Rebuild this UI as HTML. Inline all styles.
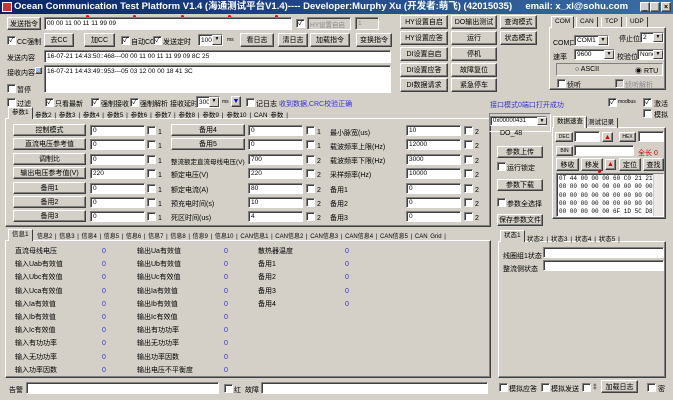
<!DOCTYPE html>
<html><head><meta charset="utf-8"><style>
*{box-sizing:border-box;margin:0;padding:0}
body{width:673px;height:400px;background:#d4d0c8;font-family:"Liberation Sans","Noto Sans CJK SC",sans-serif;font-size:7px;color:#000;position:relative;overflow:hidden}
.a{position:absolute;white-space:nowrap}
.btn{position:absolute;background:#d4d0c8;border:1px solid;border-color:#fff #404040 #404040 #fff;box-shadow:inset -1px -1px #808080;text-align:center;font-size:7px;display:flex;align-items:center;justify-content:center;white-space:nowrap;overflow:hidden}
.in{position:absolute;background:#fff;border:1px solid;border-color:#808080 #fff #fff #808080;box-shadow:inset 1px 1px #404040;font-size:6.5px;padding-left:2px;display:flex;align-items:center;white-space:nowrap;overflow:hidden}
.cb{position:absolute;width:9px;height:9px;background:#fff;border:1px solid;border-color:#808080 #fff #fff #808080;box-shadow:inset 1px 1px #404040;font-size:7px;line-height:7px;text-align:center}
.pan{position:absolute;border:1px solid;border-color:#fff #404040 #404040 #fff;box-shadow:inset -1px -1px #808080}
.tab{position:absolute;font-size:6.5px;border-left:1px solid #fff;border-right:1px solid #404040;padding:0 3px;height:10px;line-height:10px}
.v{color:#3333cc}
.dd{position:absolute;width:10px;background:#d4d0c8;border:1px solid;border-color:#fff #404040 #404040 #fff;font-size:5px;text-align:center}
.red{position:absolute;width:3px;height:3px;background:#e00;border-radius:2px;top:15px}
</style></head><body>
<div class="a" style="left:0;top:0;width:673px;height:14px;background:linear-gradient(90deg,#0a246a,#3a6ea5);color:#fff;font-weight:bold;font-size:9.5px;line-height:14px;padding-left:14px">Ocean Communication Test Platform V1.4 (海通测试平台V1.4)---- Developer:Murphy Xu (开发者:萌飞) (42015035) &nbsp; &nbsp; email: x_xl@sohu.com</div>
<div class="a" style="left:2px;top:2px;width:10px;height:10px;background:#c33;border:1px solid #fff"></div>
<div class="btn" style="left:640px;top:2px;width:10px;height:10px;font-size:7px">_</div>
<div class="btn" style="left:650px;top:2px;width:10px;height:10px"></div>
<div class="btn" style="left:661px;top:2px;width:10px;height:10px;font-weight:bold">×</div>
<div class="red" style="left:86px"></div><div class="red" style="left:133px"></div><div class="red" style="left:181px"></div><div class="red" style="left:228px"></div><div class="red" style="left:275px"></div>

<div class="btn" style="left:7px;top:17px;width:34px;height:13px">发送指令</div>
<div class="in" style="left:44px;top:17px;width:248px;height:13px">00 00 11 00 11 11 99 09</div>
<div class="cb" style="left:296px;top:19px">✓</div>
<div class="in" style="left:307px;top:17px;width:44px;height:13px;background:#d4d0c8;color:#888">HY设置自启</div>
<div class="in" style="left:355px;top:17px;width:24px;height:13px;background:#d4d0c8;color:#888">1</div>

<div class="cb" style="left:7px;top:36px">✓</div><div class="a" style="left:17px;top:37px">CC强制</div>
<div class="btn" style="left:44px;top:33px;width:30px;height:14px">去CC</div>
<div class="btn" style="left:84px;top:33px;width:31px;height:14px">加CC</div>
<div class="cb" style="left:121px;top:36px">✓</div><div class="a" style="left:131px;top:37px">自动CC</div>
<div class="cb" style="left:153px;top:36px">✓</div><div class="a" style="left:163px;top:37px">发送定时</div>
<div class="in" style="left:198px;top:34px;width:25px;height:12px">1000</div><div class="dd" style="left:212px;top:35px;height:10px">▼</div>
<div class="a" style="left:227px;top:37px;font-size:5px">ms</div>
<div class="btn" style="left:240px;top:33px;width:34px;height:14px">看日志</div>
<div class="btn" style="left:278px;top:33px;width:30px;height:14px">清日志</div>
<div class="btn" style="left:310px;top:33px;width:40px;height:14px">加载指令</div>
<div class="btn" style="left:356px;top:33px;width:36px;height:14px">变换指令</div>

<div class="a" style="left:7px;top:53px">发送内容</div>
<div class="in" style="left:44px;top:50px;width:347px;height:13px">16-07-21 14:43:50::468---00 00 11 00 11 11 99 09 8C 25</div>
<div class="a" style="left:7px;top:68px">接收内容</div>
<div class="btn" style="left:35px;top:67px;width:7px;height:7px;background:#9bf"></div>
<div class="in" style="left:44px;top:65px;width:347px;height:28px;align-items:flex-start;padding-top:2px">16-07-21 14:43:49::953---05 03 12 00 00 18 41 3C</div>
<div class="cb" style="left:7px;top:84px"></div><div class="a" style="left:17px;top:85px">暂停</div>

<div class="cb" style="left:7px;top:98px"></div><div class="a" style="left:17px;top:99px">过滤</div>
<div class="cb" style="left:45px;top:98px">✓</div><div class="a" style="left:55px;top:99px">只看最新</div>
<div class="cb" style="left:91px;top:98px">✓</div><div class="a" style="left:101px;top:99px">强制接收</div>
<div class="cb" style="left:130px;top:98px">✓</div><div class="a" style="left:140px;top:99px">强制解析 接收延时</div>
<div class="in" style="left:196px;top:96px;width:24px;height:12px">300</div><div class="dd" style="left:209px;top:97px;height:10px">▼</div>
<div class="a" style="left:222px;top:99px;font-size:5px">ms</div>
<div class="btn" style="left:231px;top:96px;width:10px;height:11px;color:#00c">▼</div>
<div class="cb" style="left:246px;top:98px"></div><div class="a" style="left:256px;top:99px">记日志 <span class="v">收到数据,CRC校验正确</span></div>
<div class="a v" style="left:490px;top:100px">接口模式0端口打开成功</div>
<div class="cb" style="left:608px;top:98px">✓</div><div class="a" style="left:618px;top:99px;font-size:5px">modbus</div>
<div class="cb" style="left:643px;top:98px">✓</div><div class="a" style="left:654px;top:99px">激活</div>
<div class="cb" style="left:643px;top:109px"></div><div class="a" style="left:654px;top:110px">模拟</div>

<div class="btn" style="left:400px;top:15px;width:48px;height:14px">HY设置自启</div>
<div class="btn" style="left:451px;top:15px;width:46px;height:14px">DO输出测试</div>
<div class="btn" style="left:500px;top:15px;width:37px;height:14px">查询模式</div>
<div class="btn" style="left:400px;top:31px;width:48px;height:14px">HY设置应答</div>
<div class="btn" style="left:451px;top:31px;width:46px;height:14px">运行</div>
<div class="btn" style="left:500px;top:31px;width:37px;height:14px">状态模式</div>
<div class="btn" style="left:400px;top:47px;width:48px;height:14px">DI设置自启</div>
<div class="btn" style="left:451px;top:47px;width:46px;height:14px">停机</div>
<div class="btn" style="left:400px;top:63px;width:48px;height:14px">DI设置应答</div>
<div class="btn" style="left:451px;top:63px;width:46px;height:14px">故障复位</div>
<div class="btn" style="left:400px;top:78px;width:48px;height:14px">DI数据请求</div>
<div class="btn" style="left:451px;top:78px;width:46px;height:14px">紧急停车</div>

<div class="pan" style="left:549px;top:27px;width:117px;height:63px"></div>
<div class="tab" style="left:551px;top:16px;height:12px;background:#d4d0c8;border-top:1px solid #fff">COM</div>
<div class="tab" style="left:576px;top:17px">CAN</div><div class="tab" style="left:601px;top:17px">TCP</div><div class="tab" style="left:626px;top:17px">UDP</div>
<div class="a" style="left:553px;top:38px">COM口</div>
<div class="in" style="left:574px;top:35px;width:35px;height:11px">COM1</div><div class="dd" style="left:598px;top:36px;height:9px">▼</div>
<div class="a" style="left:619px;top:34px">停止位</div>
<div class="in" style="left:640px;top:32px;width:24px;height:11px">2</div><div class="dd" style="left:653px;top:33px;height:9px">▼</div>
<div class="a" style="left:553px;top:52px">速率</div>
<div class="in" style="left:574px;top:49px;width:41px;height:11px">9600</div><div class="dd" style="left:604px;top:50px;height:9px">▼</div>
<div class="a" style="left:617px;top:52px">校验位</div>
<div class="in" style="left:637px;top:49px;width:27px;height:11px">None</div><div class="dd" style="left:653px;top:50px;height:9px">▼</div>
<div class="pan" style="left:556px;top:63px;width:107px;height:13px;border-color:#808080 #fff #fff #808080;box-shadow:none"></div>
<div class="a" style="left:575px;top:66px">○ ASCII</div><div class="a" style="left:635px;top:66px">◉ RTU</div>
<div class="cb" style="left:557px;top:79px"></div><div class="a" style="left:567px;top:80px">侦听</div>
<div class="cb" style="left:615px;top:79px;background:#d4d0c8"></div><div class="a" style="left:625px;top:80px;color:#888">侦听解析</div>

<div class="pan" style="left:5px;top:118px;width:486px;height:109px"></div>
<div class="tab" style="left:8px;top:107px;height:12px;background:#d4d0c8;border-top:1px solid #fff">参数1</div>
<div class="a" style="left:35px;top:109px;font-size:6.5px;word-spacing:1px">参数2 | 参数3 | 参数4 | 参数5 | 参数6 | 参数7 | 参数8 | 参数9 | 参数10 | CAN 参数 |</div>

<div class="btn" style="left:13px;top:124px;width:73px;height:12px">控制模式</div>
<div class="btn" style="left:13px;top:138px;width:73px;height:12px">直流电压参考值</div>
<div class="btn" style="left:13px;top:153px;width:73px;height:12px">调制比</div>
<div class="btn" style="left:13px;top:167px;width:73px;height:12px">输出电压参考值(V)</div>
<div class="btn" style="left:13px;top:182px;width:73px;height:12px">备用1</div>
<div class="btn" style="left:13px;top:196px;width:73px;height:12px">备用2</div>
<div class="btn" style="left:13px;top:210px;width:73px;height:12px">备用3</div>
<div class="in" style="left:90px;top:125px;width:55px;height:11px">0</div>
<div class="in" style="left:90px;top:139px;width:55px;height:11px">0</div>
<div class="in" style="left:90px;top:154px;width:55px;height:11px">0</div>
<div class="in" style="left:90px;top:168px;width:55px;height:11px">220</div>
<div class="in" style="left:90px;top:183px;width:55px;height:11px">0</div>
<div class="in" style="left:90px;top:197px;width:55px;height:11px">0</div>
<div class="in" style="left:90px;top:211px;width:55px;height:11px">0</div>

<div class="btn" style="left:171px;top:124px;width:74px;height:12px">备用4</div>
<div class="btn" style="left:171px;top:138px;width:74px;height:12px">备用5</div>
<div class="a" style="left:171px;top:156px;font-size:6.5px">整流额定直流母线电压(V)</div>
<div class="a" style="left:171px;top:170px">额定电压(V)</div>
<div class="a" style="left:171px;top:185px">额定电流(A)</div>
<div class="a" style="left:171px;top:199px">预充电时间(s)</div>
<div class="a" style="left:171px;top:213px">死区时间(us)</div>
<div class="in" style="left:248px;top:125px;width:55px;height:11px">0</div>
<div class="in" style="left:248px;top:139px;width:55px;height:11px">0</div>
<div class="in" style="left:248px;top:154px;width:55px;height:11px">700</div>
<div class="in" style="left:248px;top:168px;width:55px;height:11px">220</div>
<div class="in" style="left:248px;top:183px;width:55px;height:11px">80</div>
<div class="in" style="left:248px;top:197px;width:55px;height:11px">10</div>
<div class="in" style="left:248px;top:211px;width:55px;height:11px">4</div>

<div class="a" style="left:330px;top:128px">最小脉宽(us)</div>
<div class="a" style="left:330px;top:142px">载波频率上限(Hz)</div>
<div class="a" style="left:330px;top:156px">载波频率下限(Hz)</div>
<div class="a" style="left:330px;top:170px">采样频率(Hz)</div>
<div class="a" style="left:330px;top:185px">备用1</div>
<div class="a" style="left:330px;top:199px">备用2</div>
<div class="a" style="left:330px;top:213px">备用3</div>
<div class="in" style="left:406px;top:125px;width:55px;height:11px">10</div>
<div class="in" style="left:406px;top:139px;width:55px;height:11px">12000</div>
<div class="in" style="left:406px;top:154px;width:55px;height:11px">3000</div>
<div class="in" style="left:406px;top:168px;width:55px;height:11px">10000</div>
<div class="in" style="left:406px;top:183px;width:55px;height:11px">0</div>
<div class="in" style="left:406px;top:197px;width:55px;height:11px">0</div>
<div class="in" style="left:406px;top:211px;width:55px;height:11px">0</div>

<div class="cb" style="left:147px;top:126px"></div><div class="cb" style="left:147px;top:140px"></div><div class="cb" style="left:147px;top:155px"></div><div class="cb" style="left:147px;top:169px"></div><div class="cb" style="left:147px;top:184px"></div><div class="cb" style="left:147px;top:198px"></div><div class="cb" style="left:147px;top:212px"></div>
<div class="cb" style="left:306px;top:126px"></div><div class="cb" style="left:306px;top:140px"></div><div class="cb" style="left:306px;top:155px"></div><div class="cb" style="left:306px;top:169px"></div><div class="cb" style="left:306px;top:184px"></div><div class="cb" style="left:306px;top:198px"></div><div class="cb" style="left:306px;top:212px"></div>
<div class="cb" style="left:464px;top:126px"></div><div class="cb" style="left:464px;top:140px"></div><div class="cb" style="left:464px;top:155px"></div><div class="cb" style="left:464px;top:169px"></div><div class="cb" style="left:464px;top:184px"></div><div class="cb" style="left:464px;top:198px"></div><div class="cb" style="left:464px;top:212px"></div>
<div class="a" style="left:158px;top:126px;line-height:14.4px">1<br>1<br>1<br>1<br>1<br>1<br>1</div>
<div class="a" style="left:317px;top:126px;line-height:14.4px">1<br>1<br>2<br>2<br>2<br>2<br>2</div>
<div class="a" style="left:475px;top:126px;line-height:14.4px">2<br>2<br>2<br>2<br>2<br>2<br>2</div>

<div class="pan" style="left:5px;top:240px;width:486px;height:138px"></div>
<div class="tab" style="left:8px;top:229px;height:12px;background:#d4d0c8;border-top:1px solid #fff">信息1</div>
<div class="a" style="left:37px;top:231px;font-size:6px;word-spacing:1px">信息2 | 信息3 | 信息4 | 信息5 | 信息6 | 信息7 | 信息8 | 信息9 | 信息10 | CAN信息1 | CAN信息2 | CAN信息3 | CAN信息4 | CAN信息5 | CAN Grid |</div>
<div class="a" style="left:15px;top:245px;line-height:13.2px">直流母线电压<br>输入Uab有效值<br>输入Ubc有效值<br>输入Uca有效值<br>输入Ia有效值<br>输入Ib有效值<br>输入Ic有效值<br>输入有功功率<br>输入无功功率<br>输入功率因数</div>
<div class="a v" style="left:102px;top:245px;line-height:13.2px">0<br>0<br>0<br>0<br>0<br>0<br>0<br>0<br>0<br>0</div>
<div class="a" style="left:137px;top:245px;line-height:13.2px">输出Ua有效值<br>输出Ub有效值<br>输出Uc有效值<br>输出Ia有效值<br>输出Ib有效值<br>输出Ic有效值<br>输出有功功率<br>输出无功功率<br>输出功率因数<br>输出电压不平衡度</div>
<div class="a v" style="left:224px;top:245px;line-height:13.2px">0<br>0<br>0<br>0<br>0<br>0<br>0<br>0<br>0<br>0</div>
<div class="a" style="left:258px;top:245px;line-height:13.2px">散热器温度<br>备用1<br>备用2<br>备用3<br>备用4</div>
<div class="a v" style="left:345px;top:245px;line-height:13.2px">0<br>0<br>0<br>0<br>0</div>

<div class="a" style="left:9px;top:385px">告警</div>
<div class="in" style="left:26px;top:382px;width:193px;height:12px"></div>
<div class="cb" style="left:224px;top:384px"></div><div class="a" style="left:234px;top:385px">红</div>
<div class="a" style="left:245px;top:385px">故障</div>
<div class="in" style="left:261px;top:382px;width:227px;height:12px"></div>

<div class="pan" style="left:489px;top:113px;width:62px;height:19px;border-color:#808080 #fff #fff #808080;box-shadow:none"></div>
<div class="in" style="left:490px;top:116px;width:57px;height:10px;font-size:6px">0x00000431</div><div class="dd" style="left:537px;top:117px;height:8px">▼</div>
<div class="a" style="left:500px;top:130px">DO_48</div>
<div class="btn" style="left:497px;top:146px;width:46px;height:12px">参数上传</div>
<div class="cb" style="left:497px;top:162px"></div><div class="a" style="left:507px;top:163px">运行锁定</div>
<div class="btn" style="left:497px;top:179px;width:46px;height:12px">参数下载</div>
<div class="cb" style="left:497px;top:198px"></div><div class="a" style="left:507px;top:199px">参数全选择</div>
<div class="btn" style="left:497px;top:214px;width:46px;height:12px">保存参数文件</div>

<div class="pan" style="left:552px;top:127px;width:114px;height:92px"></div>
<div class="tab" style="left:553px;top:116px;height:12px;background:#d4d0c8;border-top:1px solid #fff">数据速查</div>
<div class="tab" style="left:584px;top:118px">测试记录</div>
<div class="btn" style="left:555px;top:132px;width:18px;height:10px;font-size:5px">DEC</div>
<div class="in" style="left:574px;top:131px;width:26px;height:11px"></div>
<div class="btn" style="left:602px;top:132px;width:11px;height:10px;color:#d00;font-size:7px">▲</div>
<div class="btn" style="left:619px;top:132px;width:17px;height:10px;font-size:5px">HEX</div>
<div class="in" style="left:638px;top:131px;width:26px;height:11px"></div>
<div class="btn" style="left:556px;top:146px;width:17px;height:10px;font-size:5px">BIN</div>
<div class="in" style="left:574px;top:145px;width:60px;height:11px"></div>
<div class="a" style="left:638px;top:148px;color:#c00">全长 0</div>
<div class="btn" style="left:556px;top:158px;width:23px;height:13px">移收</div>
<div class="btn" style="left:581px;top:158px;width:22px;height:13px">移发</div>
<div class="btn" style="left:605px;top:159px;width:11px;height:11px;color:#d00;font-size:7px">▲</div>
<div class="btn" style="left:619px;top:158px;width:22px;height:13px">定位</div>
<div class="btn" style="left:643px;top:158px;width:21px;height:13px">查找</div>
<div class="a" style="left:598px;top:170px;width:3px;height:3px;background:#e00;border-radius:2px"></div>
<div class="in" style="left:556px;top:173px;width:108px;height:44px;font-family:'Liberation Mono',monospace;font-size:6px;line-height:8.3px;align-items:flex-start;padding-top:1px">0T 44 00 00 00 60 C0 21 21 00<br>00 00 00 00 00 00 00 00 00 00<br>00 00 00 00 00 00 00 00 00 00<br>00 00 00 00 00 00 00 00 00 00<br>00 00 00 00 00 6F 1D 5C D8 00</div>
<div class="a" style="left:653px;top:174px;width:10px;height:42px;background:#ece9e4;border-left:1px solid #ccc"></div>

<div class="pan" style="left:498px;top:241px;width:168px;height:137px"></div>
<div class="tab" style="left:500px;top:230px;height:12px;background:#d4d0c8;border-top:1px solid #fff">状态1</div>
<div class="a" style="left:527px;top:233px;font-size:6.5px;word-spacing:1px">状态2 | 状态3 | 状态4 | 状态5 |</div>
<div class="a" style="left:503px;top:251px">线圈组1状态</div>
<div class="in" style="left:543px;top:247px;width:121px;height:11px"></div>
<div class="a" style="left:503px;top:264px">整流侧状态</div>
<div class="in" style="left:543px;top:260px;width:121px;height:11px"></div>

<div class="cb" style="left:499px;top:383px"></div><div class="a" style="left:509px;top:384px">模拟应答</div>
<div class="cb" style="left:541px;top:383px"></div><div class="a" style="left:551px;top:384px">模拟发送</div>
<div class="cb" style="left:582px;top:383px"></div><div class="a" style="left:593px;top:384px">‡</div>
<div class="btn" style="left:601px;top:380px;width:37px;height:13px">加载日志</div>
<div class="cb" style="left:647px;top:383px"></div><div class="a" style="left:658px;top:384px">密</div>
</body></html>
